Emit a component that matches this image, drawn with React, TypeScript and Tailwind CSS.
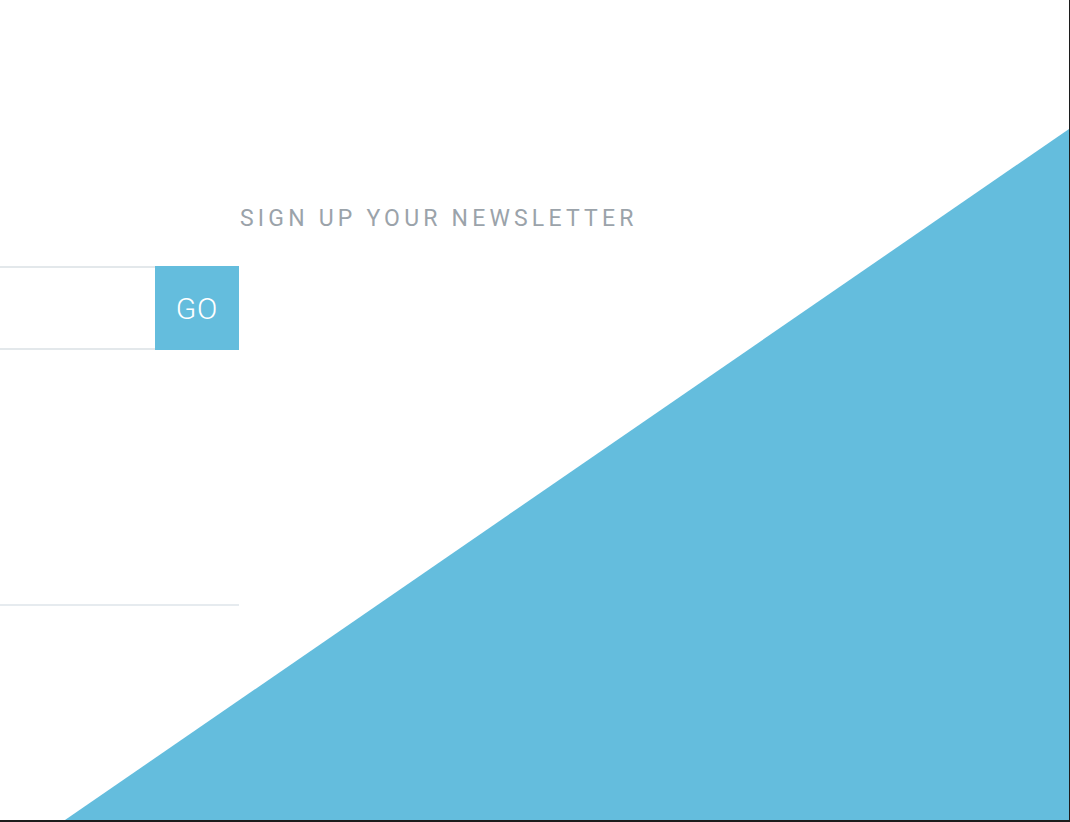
import { useState } from "react";

export default function App() {
  const [email, setEmail] = useState("");

  return (
    <div className="relative w-[1070px] h-[822px] overflow-hidden bg-white border-r border-b-2 border-[#1c1c1c] font-['Roboto','Liberation_Sans',sans-serif]">
      {/* Decorative corner triangle */}
      <svg
        className="absolute inset-0 pointer-events-none"
        width="1069"
        height="820"
        viewBox="0 0 1069 820"
        preserveAspectRatio="none"
      >
        <polygon points="65,820 1069,129 1069,820" fill="#64bddd" />
      </svg>

      <div className="relative flex">
        {/* Left column: form + divider */}
        <div className="w-[239px] pt-[266px] flex flex-col">
          <form
            className="flex h-[84px]"
            onSubmit={(e) => e.preventDefault()}
          >
            <input
              type="email"
              value={email}
              onChange={(e) => setEmail(e.target.value)}
              className="flex-1 min-w-0 border-y-2 border-[#e3e8eb] bg-white outline-none px-4 text-lg text-gray-600"
            />
            <button
              type="submit"
              className="w-[84px] bg-[#64bddd] text-white text-[30px] font-light tracking-wide"
            >
              GO
            </button>
          </form>
          <div className="mt-[254px] h-[2px] bg-[#e6ebef]" />
        </div>

        {/* Right column: heading */}
        <div className="pl-[1px] pt-[205px]">
          <h2 className="text-[23px] leading-[28px] tracking-[4.2px] text-[#9ba3aa] font-normal whitespace-nowrap">
            SIGN UP YOUR NEWSLETTER
          </h2>
        </div>
      </div>
    </div>
  );
}
